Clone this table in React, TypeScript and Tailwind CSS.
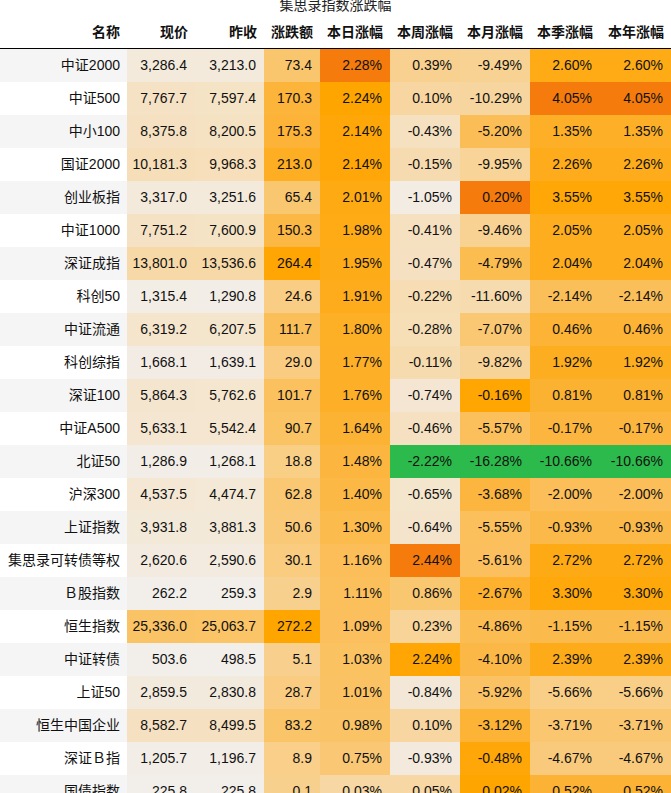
import React from 'react';

type Row = [string, string, string, string, string, string, string, string, string];

const rows: Row[] = [
  ['中证2000', '3,286.4', '3,213.0', '73.4', '2.28%', '0.39%', '-9.49%', '2.60%', '2.60%'],
  ['中证500', '7,767.7', '7,597.4', '170.3', '2.24%', '0.10%', '-10.29%', '4.05%', '4.05%'],
  ['中小100', '8,375.8', '8,200.5', '175.3', '2.14%', '-0.43%', '-5.20%', '1.35%', '1.35%'],
  ['国证2000', '10,181.3', '9,968.3', '213.0', '2.14%', '-0.15%', '-9.95%', '2.26%', '2.26%'],
  ['创业板指', '3,317.0', '3,251.6', '65.4', '2.01%', '-1.05%', '0.20%', '3.55%', '3.55%'],
  ['中证1000', '7,751.2', '7,600.9', '150.3', '1.98%', '-0.41%', '-9.46%', '2.05%', '2.05%'],
  ['深证成指', '13,801.0', '13,536.6', '264.4', '1.95%', '-0.47%', '-4.79%', '2.04%', '2.04%'],
  ['科创50', '1,315.4', '1,290.8', '24.6', '1.91%', '-0.22%', '-11.60%', '-2.14%', '-2.14%'],
  ['中证流通', '6,319.2', '6,207.5', '111.7', '1.80%', '-0.28%', '-7.07%', '0.46%', '0.46%'],
  ['科创综指', '1,668.1', '1,639.1', '29.0', '1.77%', '-0.11%', '-9.82%', '1.92%', '1.92%'],
  ['深证100', '5,864.3', '5,762.6', '101.7', '1.76%', '-0.74%', '-0.16%', '0.81%', '0.81%'],
  ['中证A500', '5,633.1', '5,542.4', '90.7', '1.64%', '-0.46%', '-5.57%', '-0.17%', '-0.17%'],
  ['北证50', '1,286.9', '1,268.1', '18.8', '1.48%', '-2.22%', '-16.28%', '-10.66%', '-10.66%'],
  ['沪深300', '4,537.5', '4,474.7', '62.8', '1.40%', '-0.65%', '-3.68%', '-2.00%', '-2.00%'],
  ['上证指数', '3,931.8', '3,881.3', '50.6', '1.30%', '-0.64%', '-5.55%', '-0.93%', '-0.93%'],
  ['集思录可转债等权', '2,620.6', '2,590.6', '30.1', '1.16%', '2.44%', '-5.61%', '2.72%', '2.72%'],
  ['Ｂ股指数', '262.2', '259.3', '2.9', '1.11%', '0.86%', '-2.67%', '3.30%', '3.30%'],
  ['恒生指数', '25,336.0', '25,063.7', '272.2', '1.09%', '0.23%', '-4.86%', '-1.15%', '-1.15%'],
  ['中证转债', '503.6', '498.5', '5.1', '1.03%', '2.24%', '-4.10%', '2.39%', '2.39%'],
  ['上证50', '2,859.5', '2,830.8', '28.7', '1.01%', '-0.84%', '-5.92%', '-5.66%', '-5.66%'],
  ['恒生中国企业', '8,582.7', '8,499.5', '83.2', '0.98%', '0.10%', '-3.12%', '-3.71%', '-3.71%'],
  ['深证Ｂ指', '1,205.7', '1,196.7', '8.9', '0.75%', '-0.93%', '-0.48%', '-4.67%', '-4.67%'],
  ['国债指数', '225.8', '225.8', '0.1', '0.03%', '0.05%', '0.02%', '0.52%', '0.52%'],
];

const headers = ['名称', '现价', '昨收', '涨跌额', '本日涨幅', '本周涨幅', '本月涨幅', '本季涨幅', '本年涨幅'];

// gradient range per column, and whether the column max / min is highlighted
const cols: { lo: number; hi: number; max?: boolean; min?: boolean }[] = [
  { lo: 0, hi: 1 },
  { lo: 0, hi: 40000 },
  { lo: 0, hi: 40000 },
  { lo: -230, hi: 272.2 },
  { lo: -1.2, hi: 2.24, max: true },
  { lo: -1.2, hi: 2.3, max: true, min: true },
  { lo: -16.8, hi: 0.02, max: true, min: true },
  { lo: -15, hi: 4.0, max: true, min: true },
  { lo: -15, hi: 4.0, max: true, min: true },
];

const stops: [number, number[]][] = [
  [0, [242, 239, 236]],
  [0.35, [247, 216, 166]],
  [0.6, [250, 198, 110]],
  [0.8, [252, 180, 58]],
  [1, [255, 165, 0]],
];

const num = (s: string) => parseFloat(s.replace(/[,%]/g, ''));

function gradient(t: number) {
  t = Math.max(0, Math.min(1, t));
  for (let i = 1; i < stops.length; i++) {
    const [t1, c1] = stops[i];
    const [t0, c0] = stops[i - 1];
    if (t <= t1) {
      const f = (t - t0) / (t1 - t0);
      const c = c0.map((v, k) => Math.round(v + (c1[k] - v) * f));
      return `rgb(${c[0]},${c[1]},${c[2]})`;
    }
  }
  return 'rgb(255,165,0)';
}

function cellColor(ci: number, value: number) {
  const col = cols[ci];
  const values = rows.map(r => num(r[ci]));
  if (col.max && value === Math.max(...values)) return '#f47b0c';
  if (col.min && value === Math.min(...values)) return '#2bba4b';
  return gradient((value - col.lo) / (col.hi - col.lo));
}

const grid = 'grid grid-cols-[127px_68px_69px_56px_70px_70px_70px_70px_71px]';

export default function App() {
  return (
    <div className="w-[671px] bg-white text-[14px] text-[#111] font-['Liberation_Sans','Noto_Sans_CJK_SC',sans-serif]">
      <div className="h-[16px] text-center leading-[11px] text-[#222]">集思录指数涨跌幅</div>

      <div className={`${grid} h-[33px] border-b border-black font-bold`}>
        {headers.map(h => (
          <div key={h} className="flex items-center justify-end pr-[7px]">{h}</div>
        ))}
      </div>

      {rows.map((r, ri) => (
        <div key={r[0]} className={`${grid} h-[33px]`}>
          <div className={`flex items-center justify-end pr-[7px] ${ri % 2 === 0 ? 'bg-[#f5f5f5]' : 'bg-white'}`}>
            {r[0]}
          </div>
          {r.slice(1).map((v, i) => (
            <div
              key={i}
              className="flex items-center justify-end pr-[8px]"
              style={{ backgroundColor: cellColor(i + 1, num(v)) }}
            >
              {v}
            </div>
          ))}
        </div>
      ))}
    </div>
  );
}
